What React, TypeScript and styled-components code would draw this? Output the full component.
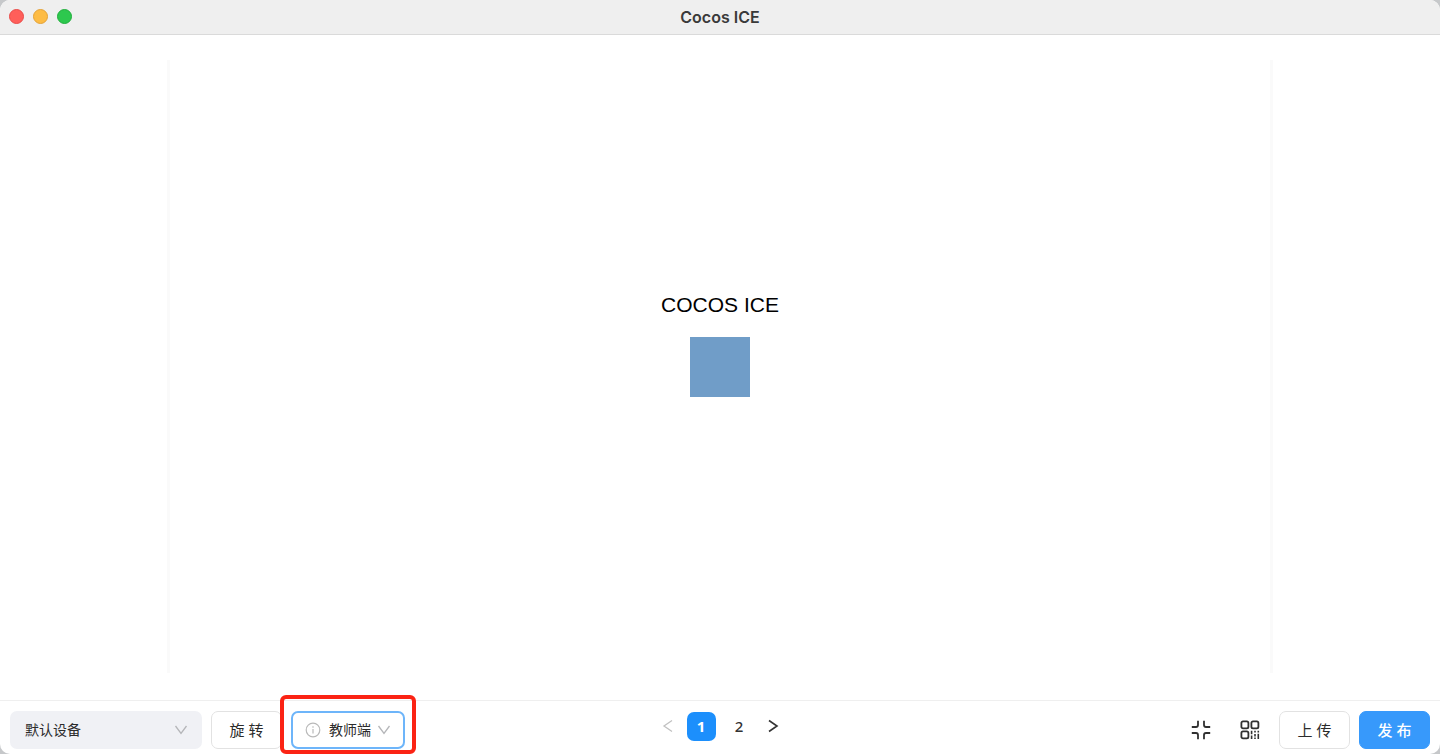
import React, { useState } from "react";
import styled, { createGlobalStyle } from "styled-components";

const GlobalStyle = createGlobalStyle`
  *, *::before, *::after { box-sizing: border-box; }
  body {
    margin: 0;
    background: #c6c8ca;
    color: #2b2b2b;
    font-family: "Liberation Sans", "Noto Sans CJK SC", sans-serif;
  }
  button, select { font: inherit; color: inherit; margin: 0; cursor: pointer; }
`;

const Window = styled.div`
  display: flex;
  flex-direction: column;
  min-height: 100vh;
  overflow: hidden;
  background: #fff;
  border-radius: 10px;
`;

const TitleBar = styled.header`
  display: grid;
  grid-template-columns: 1fr auto 1fr;
  align-items: center;
  height: 35px;
  padding: 0 9px 1px;
  background: #efefef;
  border-bottom: 1px solid #dadada;
`;

const WindowControls = styled.div`
  display: flex;
  gap: 9px;
`;

const ControlDot = styled.button<{ $fill: string; $edge: string }>`
  width: 15px;
  height: 15px;
  padding: 0;
  border: 1px solid ${(p) => p.$edge};
  border-radius: 50%;
  background: ${(p) => p.$fill};
`;

const Title = styled.h1`
  margin: 0;
  color: #3a3a3a;
  font: 600 16px/20px Inter, sans-serif;
`;

const Stage = styled.main`
  display: flex;
  flex: 1;
  padding: 25px 167px 27px;
`;

const Sheet = styled.section`
  display: flex;
  flex: 1;
  flex-direction: column;
  align-items: center;
  justify-content: center;
  gap: 20px;
  padding-bottom: 44px;
  border: solid #fafafa;
  border-width: 0 3px;
`;

const Heading = styled.h2`
  margin: 0;
  color: #000;
  font: 400 21px/24px "Liberation Sans", sans-serif;
`;

const Block = styled.div`
  width: 60px;
  height: 60px;
  background: #709dc8;
`;

const Footer = styled.footer`
  display: grid;
  grid-template-columns: 1fr auto 1fr;
  align-items: start;
  height: 54px;
  padding: 10px 10px 0;
  border-top: 1px solid #efefef;
  font-size: 15px;
`;

const Group = styled.div<{ $end?: boolean }>`
  display: flex;
  align-items: center;
  gap: 9px;
  justify-content: ${(p) => (p.$end ? "flex-end" : "flex-start")};
`;

const Field = styled.label<{ $outlined?: boolean }>`
  position: relative;
  display: flex;
  align-items: center;
  width: ${(p) => (p.$outlined ? "114px" : "192px")};
  height: 38px;
  border: ${(p) => (p.$outlined ? "2px solid #6db5fa" : "0")};
  border-radius: 7px;
  background: ${(p) => (p.$outlined ? "#fff" : "#f0f1f5")};
  font-size: 14px;

  svg { position: absolute; pointer-events: none; }
`;

const Select = styled.select<{ $inset: number }>`
  width: 100%;
  height: 100%;
  padding: 0 0 0 ${(p) => p.$inset}px;
  border: 0;
  outline: 0;
  appearance: none;
  background: transparent;
`;

const Chevron = styled.svg<{ $right: number }>`
  right: ${(p) => p.$right}px;
  width: 14px;
  height: 10px;
`;

const Info = styled.svg`
  left: 12px;
  width: 16px;
  height: 16px;
`;

const Highlighted = styled.div`
  position: relative;

  &::after {
    content: "";
    position: absolute;
    inset: -16px -11px -5px;
    border: 4px solid #fb2314;
    border-radius: 6px;
    pointer-events: none;
  }
`;

const Button = styled.button<{ $primary?: boolean }>`
  width: 71px;
  height: 38px;
  padding: 0 0 2px;
  border: 1px solid ${(p) => (p.$primary ? "#3799fb" : "#e2e2e2")};
  border-radius: 7px;
  background: ${(p) => (p.$primary ? "#3799fb" : "#fff")};
  color: ${(p) => (p.$primary ? "#fff" : "inherit")};
  font-weight: ${(p) => (p.$primary ? 500 : 400)};
`;

const IconButton = styled.button`
  display: flex;
  align-items: center;
  justify-content: center;
  width: 40px;
  height: 38px;
  padding: 0;
  border: 0;
  background: none;
`;

const Pagination = styled.nav`
  display: flex;
  gap: 9px;
  padding-top: 1px;
`;

const PageButton = styled.button<{ $active?: boolean; $arrow?: boolean }>`
  display: flex;
  align-items: center;
  justify-content: center;
  width: ${(p) => (p.$arrow ? "20px" : "29px")};
  height: 29px;
  padding: 0 0 2px;
  border: 0;
  border-radius: 7px;
  background: ${(p) => (p.$active ? "#1c8ffc" : "none")};
  color: ${(p) => (p.$active ? "#fff" : "#333")};
  font: ${(p) => (p.$active ? 700 : 500)} 15px/20px "Noto Sans", sans-serif;
`;

const Down = ({ right }: { right: number }) => (
  <Chevron $right={right} viewBox="0 0 14 10" fill="none" stroke="#b5b6b9" strokeWidth="1.3">
    <path d="M1.5 1 7 8.5 12.5 1" />
  </Chevron>
);

const Arrow = ({ next }: { next?: boolean }) => (
  <svg width="12" height="14" viewBox="0 0 12 14" fill="none" stroke={next ? "#333" : "#c1c1c1"} strokeWidth={next ? 1.6 : 1.3}>
    <path d={next ? "M2 1.5 10 7 2 12.5" : "M10 1.5 2 7 10 12.5"} />
  </svg>
);

export default function App() {
  const [page, setPage] = useState(1);
  return (
    <>
      <GlobalStyle />
      <Window>
        <TitleBar>
          <WindowControls>
            <ControlDot aria-label="关闭" $fill="#ff5f5a" $edge="#e94b48" />
            <ControlDot aria-label="最小化" $fill="#fdbc45" $edge="#e3a238" />
            <ControlDot aria-label="最大化" $fill="#2dc84e" $edge="#20ae3b" />
          </WindowControls>
          <Title>Cocos ICE</Title>
        </TitleBar>
        <Stage>
          <Sheet>
            <Heading>COCOS ICE</Heading>
            <Block />
          </Sheet>
        </Stage>
        <Footer>
          <Group>
            <Field>
              <Select $inset={15} aria-label="设备" defaultValue="default">
                <option value="default">默认设备</option>
              </Select>
              <Down right={14} />
            </Field>
            <Button>旋 转</Button>
            <Highlighted>
              <Field $outlined>
                <Info viewBox="0 0 16 16" fill="none" stroke="#b9b9b9" strokeWidth="1.2">
                  <circle cx="8" cy="8" r="6.8" />
                  <path d="M8 7v4.6M8 4.2v1.5" />
                </Info>
                <Select $inset={36} aria-label="角色" defaultValue="teacher">
                  <option value="teacher">教师端</option>
                </Select>
                <Down right={12} />
              </Field>
            </Highlighted>
          </Group>
          <Pagination aria-label="分页">
            <PageButton $arrow aria-label="上一页" onClick={() => setPage(1)}><Arrow /></PageButton>
            {[1, 2].map((n) => (
              <PageButton key={n} $active={page === n} onClick={() => setPage(n)}>{n}</PageButton>
            ))}
            <PageButton $arrow aria-label="下一页" onClick={() => setPage(2)}><Arrow next /></PageButton>
          </Pagination>
          <Group $end>
            <IconButton aria-label="退出全屏">
              <svg width="20" height="20" viewBox="0 0 20 20" fill="none" stroke="#303030" strokeWidth="1.8">
                <path d="M7 .8V5Q7 7 5 7H.8M13 .8V5Q13 7 15 7h4.2M7 19.2V15Q7 13 5 13H.8M13 19.2V15Q13 13 15 13h4.2" />
              </svg>
            </IconButton>
            <IconButton aria-label="二维码">
              <svg width="20" height="20" viewBox="0 0 20 20" fill="none" stroke="#303030" strokeWidth="1.8">
                <rect x="1.4" y="1.4" width="7" height="7" rx="1.6" />
                <rect x="11.4" y="1.4" width="7" height="7" rx="1.6" />
                <rect x="1.4" y="11.4" width="7" height="7" rx="1.6" />
                <path d="M11.6 10.8v3.4M11.6 15.6v3.4M15 10.8v1.8M15 14v2.4M15 17.4V19M18.3 10.8v1.8M18.3 13.8V19" strokeWidth="1.6" />
              </svg>
            </IconButton>
            <Button>上 传</Button>
            <Button $primary>发 布</Button>
          </Group>
        </Footer>
      </Window>
    </>
  );
}
